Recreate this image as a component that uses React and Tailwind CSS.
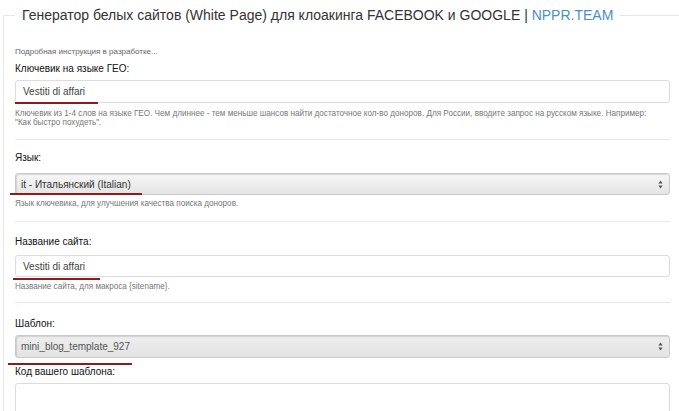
import React from 'react';

const font = { fontFamily: '"Liberation Sans", Arial, sans-serif' };

const Mark = ({ className }) => (
  <div className={`absolute h-[2px] bg-[#8a1c1f] ${className}`} />
);

const SelectBox = ({ value, dark }) => (
  <div
    className={`flex h-full items-center justify-between rounded-[3px] border border-[#c9c9c9] pl-[5px] pr-[6px] text-[10px] shadow-[inset_1px_1px_1px_rgba(0,0,0,0.12)] ${
      dark ? 'bg-gradient-to-b from-[#eeeeee] to-[#e3e3e3] text-[#555]' : 'bg-gradient-to-b from-[#f7f7f7] to-[#e4e4e4] text-[#333]'
    }`}
  >
    <span>{value}</span>
    <svg width="5" height="9" viewBox="0 0 5 9">
      <path d="M2.5 0.5 L4.6 3.6 L0.4 3.6 Z" fill="#555" />
      <path d="M2.5 8.5 L4.6 5.4 L0.4 5.4 Z" fill="#555" />
    </svg>
  </div>
);

export default function App() {
  return (
    <div className="h-[411px] w-[679px] overflow-hidden bg-white" style={font}>
      <fieldset className="ml-[3px] mt-[5px] w-[700px] border border-[#e6e6e6] pl-[11px] pr-[30px]">
        <legend className="px-[7px] text-[14px] leading-[20px] text-[#333]">
          Генератор белых сайтов (White Page) для клоакинга FACEBOOK и GOOGLE |{' '}
          <span className="text-[#4b8ec8]">NPPR.TEAM</span>
        </legend>

        <div className="w-[655px]">
          <p className="mt-[21px] text-[8px] leading-[12px] text-[#666]">Подробная инструкция в разработке...</p>

          <div className="mt-[4px] text-[10px] leading-[14px] text-[#111]">Ключевик на языке ГЕО:</div>
          <div className="relative mt-[4px] h-[23px]">
            <div className="flex h-full items-center rounded-[3px] border border-[#dcdcdc] bg-white pl-[7px] text-[10px] text-[#444]">
              Vestiti di affari
            </div>
            <Mark className="left-0 top-[22px] w-[83px]" />
          </div>
          <p className="mt-[6px] text-[8.15px] leading-[9px] text-[#777]">
            Ключевик из 1-4 слов на языке ГЕО. Чем длиннее - тем меньше шансов найти достаточное кол-во доноров. Для России, вводите запрос на русском языке. Например:
            <br />
            "Как быстро похудеть".
          </p>
          <hr className="mt-[12px] border-[#e8e8e8]" />

          <div className="mt-[11px] text-[10px] leading-[14px] text-[#111]">Язык:</div>
          <div className="relative mt-[8px] h-[22px]">
            <SelectBox value="it - Итальянский (Italian)" />
            <Mark className="left-[-5px] top-[20px] w-[132px]" />
          </div>
          <p className="mt-[4px] text-[8.15px] leading-[9px] text-[#777]">Язык ключевика, для улучшения качества поиска доноров.</p>
          <hr className="mt-[13px] border-[#e8e8e8]" />

          <div className="mt-[13px] text-[10px] leading-[14px] text-[#111]">Название сайта:</div>
          <div className="relative mt-[6px] h-[22px]">
            <div className="flex h-full items-center rounded-[3px] border border-[#dcdcdc] bg-white pl-[7px] text-[10px] text-[#444]">
              Vestiti di affari
            </div>
            <Mark className="left-[-2px] top-[23px] w-[87px]" />
          </div>
          <p className="mt-[5px] text-[8.15px] leading-[9px] text-[#777]">Название сайта, для макроса {'{sitename}'}.</p>
          <hr className="mt-[11px] border-[#e8e8e8]" />

          <div className="mt-[14px] text-[10px] leading-[14px] text-[#111]">Шаблон:</div>
          <div className="relative mt-[4px] h-[23px]">
            <SelectBox value="mini_blog_template_927" dark />
            <Mark className="left-[-7px] top-[28px] w-[124px]" />
          </div>

          <div className="mt-[7px] text-[10px] leading-[14px] text-[#111]">Код вашего шаблона:</div>
          <div className="mt-[4px] h-[120px] rounded-[3px] border border-[#dcdcdc] bg-white" />
        </div>
      </fieldset>
    </div>
  );
}
